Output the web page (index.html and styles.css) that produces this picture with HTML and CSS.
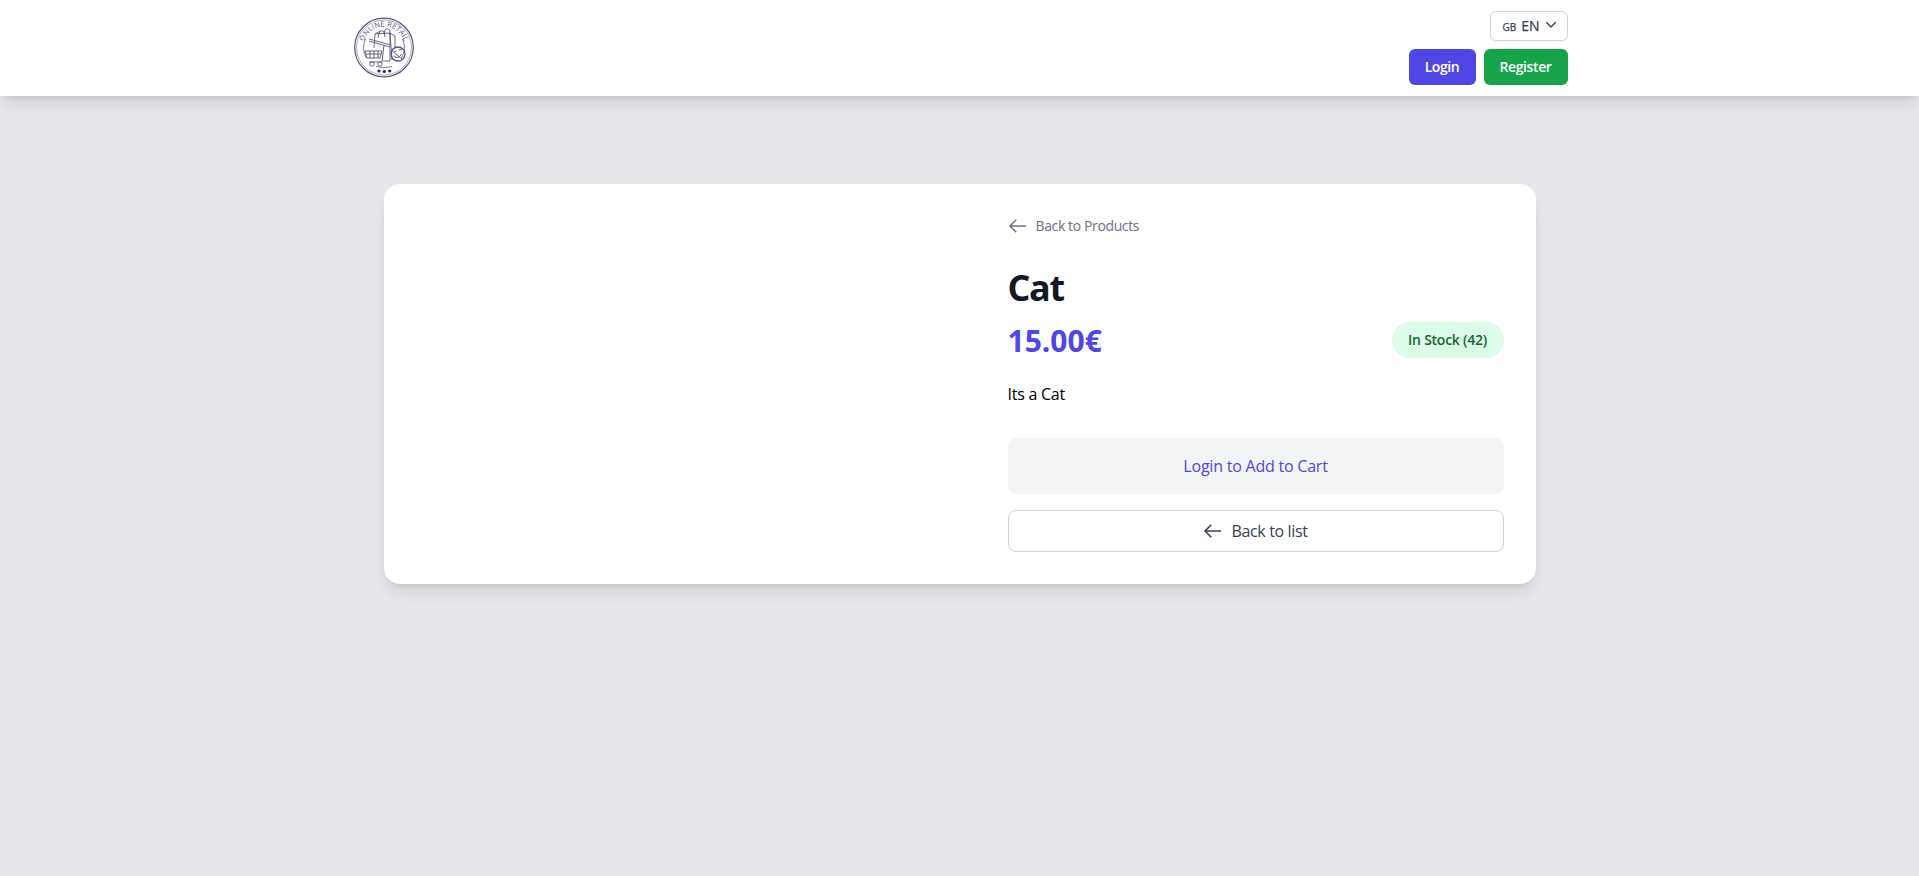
FILE: index.html
```html
<!DOCTYPE html>
<html lang="en">
<head>
<meta charset="utf-8">
<title>Online Retail</title>
<link rel="stylesheet" href="styles.css">
</head>
<body>
<header class="header">
  <div class="header-inner">
    <svg class="logo" viewBox="0 0 64 64" fill="none" stroke="#57557c" stroke-width=".9">
      <circle cx="32" cy="31.500" r="29.300" stroke-width="1.200"/>
      <circle cx="32" cy="31.500" r="27.500" stroke-width=".5"/>
      <path id="arc" d="M11 31.500a21 21 0 0 1 42 0" stroke="none"/>
      <path d="M14.500 42a20.500 20.500 0 0 1-1-19M50.500 23a20.500 20.500 0 0 1-1 19M24 50.500q8 2.500 16 0" stroke-width=".8"/>
      <text class="logo-text"><textPath href="#arc" startOffset="50%" text-anchor="middle">ONLINE RETAIL</textPath></text>
      <path d="M22 32l1-14 15-1 5 3v12M38 17v28h-7M38 17l2 27M23 18l5-3M26 22l1-5q2-4 5-1l1 5M32 18l1-4q3-3 5 1v4"/>
      <path d="M17 23l22 6M17 25l21 6M32 29l-2 17H17M13 35h17l-2 7H15zM14 38h15M18 35v7M22 35v7M26 35v7"/>
      <circle cx="20" cy="48" r="2.200"/><circle cx="28" cy="48" r="2.200"/>
      <circle cx="46" cy="38" r="7" stroke-width="1.300"/>
      <path d="M42 36l2-1M47 34l3-1M41.500 40q5 4 8-2M40 35l10 8"/>
      <g fill="#25233f" stroke="none"><circle cx="27" cy="55" r="1.600"/><circle cx="32.300" cy="55.500" r="1.600"/><circle cx="37.700" cy="55" r="1.600"/></g>
    </svg>
    <div class="actions">
      <button class="lang"><span class="flag">GB</span><span class="code">EN</span>
        <svg class="chevron" viewBox="0 0 12 8"><path d="M1.300 1.300 6 6l4.700-4.700"/></svg>
      </button>
      <div class="auth">
        <a class="btn login"><span>Login</span></a>
        <a class="btn register"><span>Register</span></a>
      </div>
    </div>
  </div>
</header>
<main class="card">
  <div class="media"></div>
  <section class="details">
    <a class="back">
      <svg class="arrow" viewBox="0 0 20 20"><path d="M8.300 3.700 2 10l6.300 6.300M2.200 10H18"/></svg>
      <span>Back to Products</span>
    </a>
    <h1 class="title">Cat</h1>
    <div class="price-row">
      <span class="price">15.00€</span>
      <span class="stock">In Stock (42)</span>
    </div>
    <p class="description">Its a Cat</p>
    <div class="cart"><a>Login to Add to Cart</a></div>
    <a class="list-link">
      <svg class="arrow" viewBox="0 0 20 20"><path d="M8.300 3.700 2 10l6.300 6.300M2.200 10H18"/></svg>
      <span>Back to list</span>
    </a>
  </section>
</main>
</body>
</html>
```
FILE: styles.css
```css
* { box-sizing: border-box; }
body {
  margin: 0;
  min-height: 876px;
  background: #e5e7eb;
  color: #000;
  font: 16px/24px "Segoe UI", "Open Sans", "Noto Sans", sans-serif;
}
.header {
  height: 96px;
  background: #fff;
  box-shadow: 0 10px 15px -3px rgba(0, 0, 0, .1), 0 4px 6px -4px rgba(0, 0, 0, .1);
}
.header-inner {
  display: flex;
  justify-content: space-between;
  align-items: center;
  max-width: 1280px;
  height: 96px;
  margin: 0 auto;
  padding: 0 32px;
}
.logo { width: 64px; height: 64px; }
.logo-text { font: 7.4px "Open Sans", sans-serif; fill: #57557c; stroke: none; letter-spacing: .1px; }
.actions { display: flex; flex-direction: column; align-items: flex-end; gap: 8px; }
.lang {
  display: flex;
  align-items: center;
  width: 78px;
  height: 30px;
  padding: 0 10px 0 12px;
  border: 1px solid #d1d5db;
  border-radius: 6px;
  background: #fff;
  color: #374151;
  font: 500 14px/20px "Segoe UI", "Open Sans", sans-serif;
  box-shadow: 0 1px 2px rgba(0, 0, 0, .05);
  -webkit-text-stroke: .25px #374151;
}
.flag { font-size: 10px; padding-top: 2px; margin-right: 5px; }
.chevron { width: 12px; height: 8px; margin: -3px 0 0 auto; fill: none; stroke: #374151; stroke-width: 1.4; }
.auth { display: flex; gap: 8px; }
.btn {
  display: flex;
  align-items: center;
  justify-content: center;
  height: 36px;
  border-radius: 6px;
  color: #fff;
  font-size: 14px;
  font-weight: 600;
  letter-spacing: -.4px;
}
.login { width: 67px; background: #4f46e5; }
.register { width: 84px; background: #16a34a; }
.card {
  display: grid;
  grid-template-columns: 1fr 1fr;
  gap: 32px;
  width: 1152px;
  height: 400px;
  margin: 88px auto 0;
  border-radius: 16px;
  background: #fff;
  box-shadow: 0 10px 15px -3px rgba(0, 0, 0, .1), 0 4px 6px -4px rgba(0, 0, 0, .1);
}
.details { display: flex; flex-direction: column; padding: 32px; }
.arrow { width: 20px; height: 20px; margin-right: 8px; fill: none; stroke: currentColor; stroke-width: 1.5; }
.back { display: flex; align-items: center; height: 20px; color: #6b7280; font-size: 14px; letter-spacing: -.38px; }
.title { margin: 32px 0 0; color: #111827; font-size: 36px; line-height: 40px; font-weight: 700; letter-spacing: -1.4px; }
.price-row { display: flex; align-items: center; justify-content: space-between; height: 36px; margin-top: 14px; }
.price { padding-top: 2px; color: #4f46e5; font-size: 30px; line-height: 36px; font-weight: 700; }
.stock {
  width: 112px;
  height: 36px;
  border-radius: 18px;
  background: #dcfce7;
  color: #166534;
  font-size: 14px;
  line-height: 36px;
  font-weight: 600;
  letter-spacing: -.25px;
  text-align: center;
}
.description { margin: 24px 0 0; letter-spacing: -.25px; }
.cart {
  height: 56px;
  margin-top: 32px;
  border-radius: 8px;
  background: #f3f4f6;
  color: #4f46e5;
  line-height: 56px;
  letter-spacing: -.22px;
  text-align: center;
}
.list-link {
  display: flex;
  align-items: center;
  justify-content: center;
  height: 42px;
  margin-top: 16px;
  border: 1px solid #d1d5db;
  border-radius: 8px;
  color: #374151;
  letter-spacing: -.35px;
}
```
